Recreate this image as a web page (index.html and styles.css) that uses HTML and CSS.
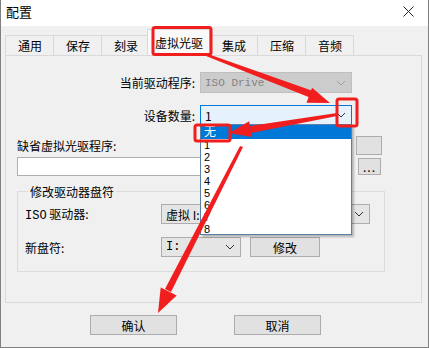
FILE: index.html
```html
<!DOCTYPE html>
<html lang="zh-CN">
<head>
  <meta charset="UTF-8">
  <meta name="viewport" content="width=device-width, initial-scale=1.0">
  <title>配置</title>
  <link rel="stylesheet" href="styles.css">
</head>
<body>
  <div class="window">
    <div class="titlebar">
      <span class="title">配置</span>
      <svg class="close" width="11" height="11" viewBox="0 0 11 11">
        <path d="M0.5 0.5 L10.5 10.5 M10.5 0.5 L0.5 10.5" stroke="#222" stroke-width="1"/>
      </svg>
    </div>

    <div class="tabs">
      <div class="tab">通用</div>
      <div class="tab">保存</div>
      <div class="tab">刻录</div>
      <div class="tab active">虚拟光驱</div>
      <div class="tab">集成</div>
      <div class="tab">压缩</div>
      <div class="tab">音频</div>
    </div>

    <div class="panel">
      <div class="form-row">
        <span class="row-label">当前驱动程序:</span>
        <div class="combo disabled">
          <span class="mono">ISO Drive</span>
          <svg class="chev" width="10" height="6" viewBox="0 0 10 6"><path d="M1 1 L5 5 L9 1" fill="none" stroke="#a0a0a0"/></svg>
        </div>
      </div>

      <div class="form-row second">
        <span class="row-label">设备数量:</span>
        <div class="combo-wrap">
          <div class="combo open">
            <span>1</span>
            <svg class="chev" width="10" height="6" viewBox="0 0 10 6"><path d="M1 1 L5 5 L9 1" fill="none" stroke="#333"/></svg>
          </div>
          <ul class="drop-list">
            <li class="selected">无</li>
            <li>1</li>
            <li>2</li>
            <li>3</li>
            <li>4</li>
            <li>5</li>
            <li>6</li>
            <li>7</li>
            <li>8</li>
          </ul>
        </div>
      </div>

      <div class="driver-path">
        <div class="path-head">
          <span>缺省虚拟光驱程序:</span>
          <button class="btn small"></button>
        </div>
        <div class="path-field">
          <input class="text-input" type="text">
          <button class="btn dots">...</button>
        </div>
      </div>

      <fieldset class="group">
        <legend>修改驱动器盘符</legend>
        <div class="group-row">
          <span class="group-label"><span class="mono-dark">ISO</span> 驱动器:</span>
          <div class="combo wide">
            <span>虚拟 I:</span>
            <svg class="chev" width="10" height="6" viewBox="0 0 10 6"><path d="M1 1 L5 5 L9 1" fill="none" stroke="#333"/></svg>
          </div>
        </div>
        <div class="group-row">
          <span class="group-label">新盘符:</span>
          <div class="combo narrow">
            <span class="mono-dark">I:</span>
            <svg class="chev" width="10" height="6" viewBox="0 0 10 6"><path d="M1 1 L5 5 L9 1" fill="none" stroke="#333"/></svg>
          </div>
          <button class="btn modify">修改</button>
        </div>
      </fieldset>
    </div>

    <div class="actions">
      <button class="btn action">确认</button>
      <button class="btn action">取消</button>
    </div>

    <!-- red annotation marks -->
    <svg class="marks" width="429" height="348" viewBox="0 0 429 348">
      <g fill="none" stroke="#f01e1e" stroke-width="3">
        <rect x="153" y="27.5" width="58" height="27" rx="2"/>
        <rect x="337" y="99" width="20" height="27" rx="2"/>
        <rect x="195" y="125" width="35" height="16" rx="2"/>
      </g>
      <g fill="#f01e1e">
        <polygon points="206,56 208,54 313,91 311,98"/>
        <polygon points="330,103 306.5,102.8 312.1,87.8"/>
        <polygon points="337,113 337,116 251,133 250,126"/>
        <polygon points="229,133 249.2,121.3 252,137.1"/>
        <polygon points="240,146 243,147 171,292 165,289"/>
        <polygon points="158,313 160.7,287.5 176.7,295.5"/>
      </g>
    </svg>
  </div>
</body>
</html>
```

FILE: styles.css
```css
body {
  margin: 0;
  padding: 0;
  background: #ffffff;
}

.window {
  position: relative;
  width: 429px;
  height: 348px;
  box-sizing: border-box;
  border: 1px solid #808080;
  border-top: none;
  background-color: #f0f0f0;
  font-family: "Noto Sans CJK SC", sans-serif;
  font-size: 12px;
  color: #000;
  overflow: hidden;
}

.titlebar {
  height: 26px;
  background-color: #ffffff;
  display: flex;
  align-items: center;
  justify-content: space-between;
  padding: 0 14px 0 5px;
}

.title {
  font-size: 13px;
  margin-top: -4px;
}

.close {
  margin-top: -4px;
}

/* tab strip */
.tabs {
  display: flex;
  align-items: flex-end;
  height: 29px;
  padding-left: 4px;
}

.tab {
  height: 20px;
  line-height: 20px;
  padding: 0 11px 0 12px;
  border: 1px solid #d9d9d9;
  border-bottom: none;
  margin-right: -1px;
  box-sizing: border-box;
  background-color: #f0f0f0;
}

.tab.active {
  height: 26px;
  line-height: 26px;
  padding: 0 6px 0 7px;
  margin: 0 -1px 0 -2px;
  background-color: #f9f9f9;
  position: relative;
  z-index: 1;
}

.panel {
  position: relative;
  height: 248px;
  margin: 0 6px 0 4px;
  border: 1px solid #d9d9d9;
  box-sizing: border-box;
  padding-top: 16px;
}

.form-row {
  display: grid;
  grid-template-columns: 189px 152px;
  column-gap: 5px;
  align-items: center;
}

.form-row.second {
  margin-top: 12px;
}

.row-label {
  text-align: right;
}

.combo {
  display: flex;
  align-items: center;
  justify-content: space-between;
  height: 20px;
  box-sizing: border-box;
  padding: 0 5px 0 4px;
  background-color: #e5e5e5;
  border: 1px solid #adadad;
}

.combo.disabled {
  height: 21px;
  background-color: #cccccc;
  border-color: #bfbfbf;
  color: #838383;
}

.combo.open {
  background-color: #e5f1fb;
  border-color: #0078d7;
}

.mono {
  font-family: "Liberation Mono", monospace;
  font-size: 11px;
}

.mono-dark {
  font-family: "Liberation Mono", monospace;
  font-size: 12px;
}

.combo-wrap {
  position: relative;
}

.drop-list {
  position: absolute;
  top: 19px;
  left: 0;
  width: 152px;
  height: 111px;
  margin: 0;
  padding: 0;
  list-style: none;
  background-color: #ffffff;
  border: 1px solid #5a7fa8;
  box-sizing: border-box;
  box-shadow: 2px 2px 2px rgba(0, 0, 0, 0.25);
  font-family: "Liberation Sans", "Noto Sans CJK SC", sans-serif;
  font-size: 11px;
  z-index: 5;
}

.drop-list li {
  height: 12px;
  line-height: 12px;
  padding-left: 3px;
  overflow: hidden;
}

.drop-list li.selected {
  height: 14px;
  line-height: 14px;
  font-size: 12px;
  background-color: #0078d7;
  color: #ffffff;
}

.driver-path {
  margin-top: 11px;
  padding: 0 40px 0 11px;
}

.path-head {
  display: flex;
  align-items: center;
  justify-content: space-between;
  height: 19px;
}

.path-field {
  display: flex;
  align-items: center;
  justify-content: space-between;
  margin-top: 2px;
}

.text-input {
  width: 330px;
  height: 19px;
  box-sizing: border-box;
  border: 1px solid #b0b0b0;
  background-color: #ffffff;
  margin: 0;
  padding: 0;
}

.btn {
  font-family: "Noto Sans CJK SC", sans-serif;
  font-size: 12px;
  background-color: #e1e1e1;
  border: 1px solid #adadad;
  padding: 0;
  margin: 0;
  box-sizing: border-box;
  color: #000;
}

.btn.small {
  width: 26px;
  height: 19px;
  margin-right: -1px;
}

.btn.dots {
  width: 23px;
  height: 17px;
  line-height: 10px;
  letter-spacing: 1px;
}

.group {
  margin: 7px 36px 0 11px;
  padding: 4px 0 14px 7px;
  border: 1px solid #dcdcdc;
}

.group legend {
  padding: 0 2px;
  margin-left: 3px;
}

.group-row {
  display: flex;
  align-items: center;
}

.group-row + .group-row {
  margin-top: 13px;
}

.group-label {
  width: 136px;
}

.combo.wide {
  width: 209px;
}

.combo.narrow {
  width: 80px;
}

.btn.modify {
  width: 70px;
  height: 20px;
  margin-left: 9px;
}

.actions {
  display: flex;
  gap: 57px;
  padding-left: 89px;
  margin-top: 12px;
}

.btn.action {
  width: 87px;
  height: 20px;
}

.marks {
  position: absolute;
  top: 0;
  left: -1px;
  pointer-events: none;
  z-index: 10;
}
```
